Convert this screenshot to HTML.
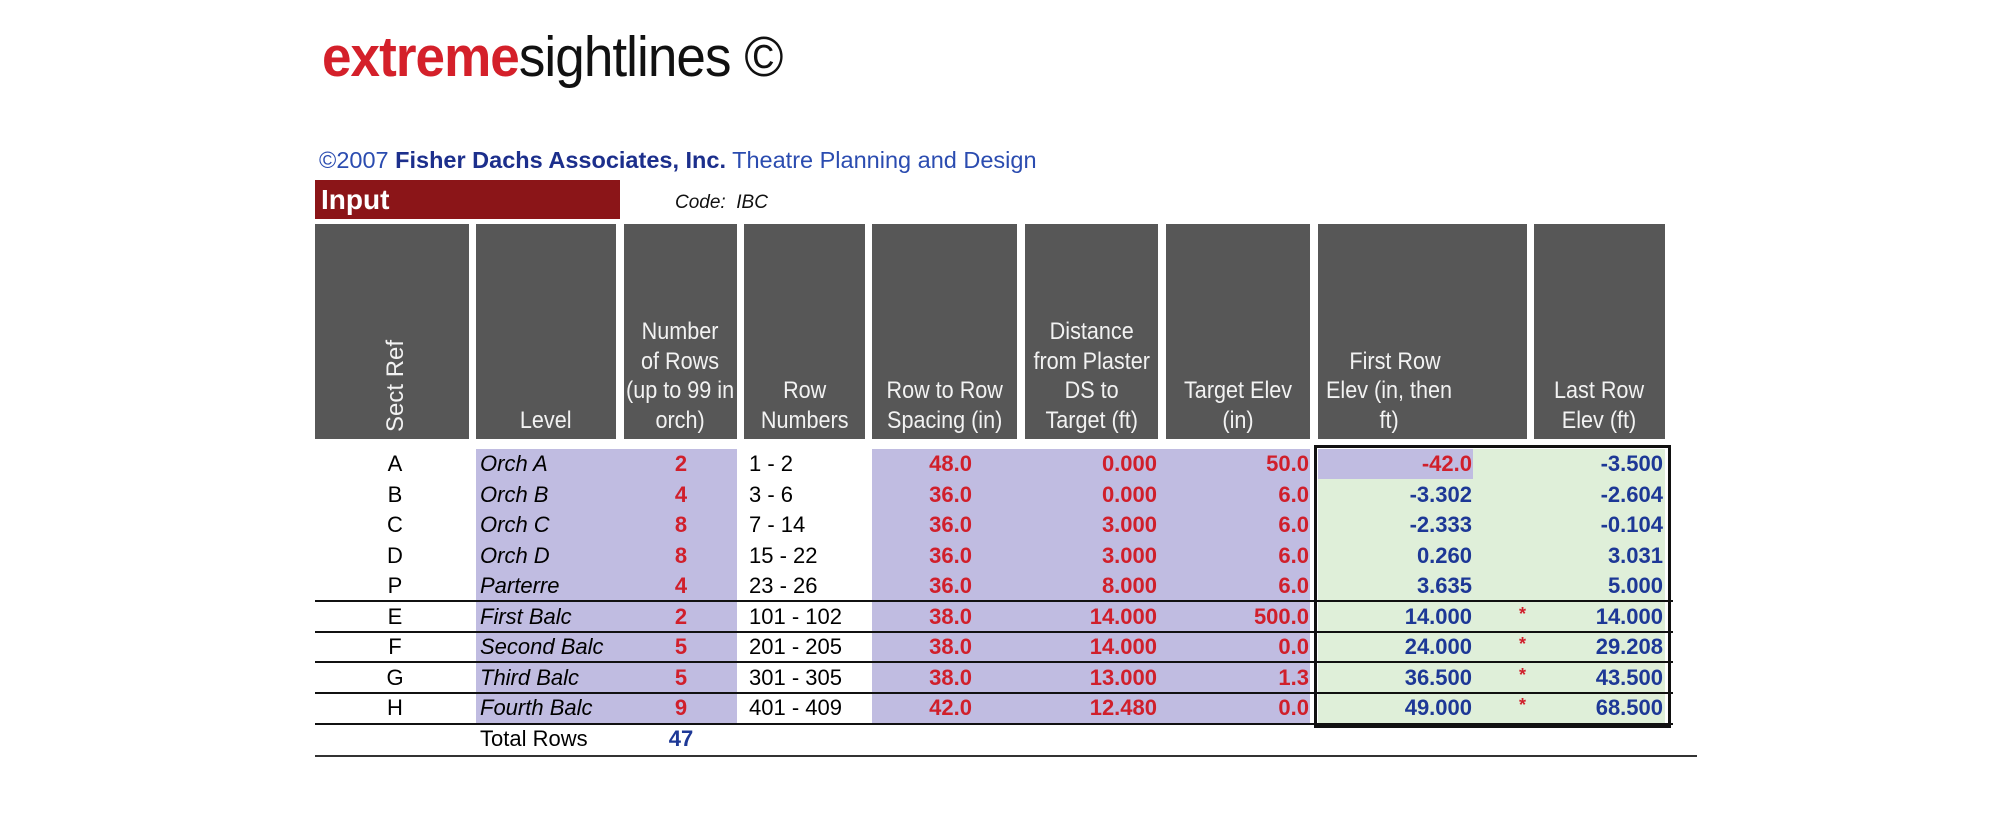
<!DOCTYPE html>
<html><head><meta charset="utf-8"><style>
*{margin:0;padding:0;box-sizing:border-box}
body{width:2000px;height:826px;background:#fff;position:relative;overflow:hidden;font-family:"Liberation Sans",Arial,sans-serif}
.a{position:absolute}
.h{position:absolute;top:224px;height:215px;background:#575757;color:#f2f2f2;font-size:24px;line-height:29.5px;display:flex;align-items:flex-end;justify-content:center;text-align:center;padding-bottom:4px}
.h span{display:inline-block;transform:scaleX(.9);white-space:nowrap}
.c{position:absolute;height:30px;line-height:30px;white-space:nowrap;font-size:22px}
.r{text-align:right;font-weight:bold;color:#d01f2b}
.b{text-align:right;font-weight:bold;color:#1d3896}
.ln{position:absolute;height:2px;background:#111}
</style></head><body>
<div class="a" style="left:322px;top:22px;font-size:57px;line-height:70px;white-space:nowrap;letter-spacing:-1px;transform:scaleX(.93);transform-origin:0 0"><span style="color:#d4202a;font-weight:bold">extreme</span><span style="color:#111">sightlines ©</span></div>
<div class="a" style="left:319px;top:147px;font-size:23.5px;white-space:nowrap;color:#2b4cb0">©2007 <b style="color:#1c2f8c">Fisher Dachs Associates, Inc.</b> Theatre Planning and Design</div>
<div class="a" style="left:315px;top:180px;width:305px;height:39px;background:#8b1518;color:#fff;font-weight:bold;font-size:28px;line-height:39px;padding-left:6px">Input</div>
<div class="a" style="left:675px;top:192px;font-size:19px;font-style:italic;color:#111">Code:&nbsp; IBC</div>

<div class="h" style="left:315px;width:154px;justify-content:flex-start;padding-left:10px"><span style="transform:rotate(-90deg);transform-origin:0 0;position:absolute;left:66px;bottom:-22px;white-space:nowrap">Sect Ref</span></div>
<div class="h" style="left:476px;width:140px"><span>Level</span></div>
<div class="h" style="left:624px;width:113px"><span>Number<br>of Rows<br>(up to 99 in<br>orch)</span></div>
<div class="h" style="left:744px;width:121px"><span>Row<br>Numbers</span></div>
<div class="h" style="left:872px;width:145px"><span>Row to Row<br>Spacing (in)</span></div>
<div class="h" style="left:1025px;width:133px"><span>Distance<br>from Plaster<br>DS to<br>Target (ft)</span></div>
<div class="h" style="left:1166px;width:144px"><span>Target Elev<br>(in)</span></div>
<div class="h" style="left:1318px;width:209px;justify-content:flex-start;padding-left:8px"><span style="transform-origin:0 0">&nbsp;&nbsp;First Row<br>Elev (in, then<br>ft)</span></div>
<div class="h" style="left:1534px;width:131px"><span>Last Row<br>Elev (ft)</span></div>

<div class="a" style="left:476px;top:449px;width:261px;height:275px;background:#c0bce1"></div>
<div class="a" style="left:872px;top:449px;width:438px;height:275px;background:#c0bce1"></div>
<div class="a" style="left:1318px;top:449px;width:347px;height:275px;background:#dfefd9"></div>
<div class="a" style="left:1318px;top:449px;width:155px;height:30px;background:#c0bce1"></div>
<div class="a" style="left:1314px;top:445px;width:357px;height:283px;border:3px solid #111"></div>

<div class="ln" style="left:315px;width:1358px;top:600px"></div>
<div class="ln" style="left:315px;width:1358px;top:631px"></div>
<div class="ln" style="left:315px;width:1358px;top:661px"></div>
<div class="ln" style="left:315px;width:1358px;top:692px"></div>
<div class="ln" style="left:315px;width:1358px;top:723px"></div>
<div class="ln" style="left:315px;width:1382px;top:755px;background:#333"></div>

<div style="position:absolute;left:0;top:449px">
<div class="c" style="top:0;left:375px;width:40px;text-align:center">A</div>
<div class="c" style="top:30.5px;left:375px;width:40px;text-align:center">B</div>
<div class="c" style="top:61px;left:375px;width:40px;text-align:center">C</div>
<div class="c" style="top:91.5px;left:375px;width:40px;text-align:center">D</div>
<div class="c" style="top:122px;left:375px;width:40px;text-align:center">P</div>
<div class="c" style="top:152.5px;left:375px;width:40px;text-align:center">E</div>
<div class="c" style="top:183px;left:375px;width:40px;text-align:center">F</div>
<div class="c" style="top:213.5px;left:375px;width:40px;text-align:center">G</div>
<div class="c" style="top:244px;left:375px;width:40px;text-align:center">H</div>
<div class="c" style="top:274.5px;left:480px">Total Rows</div>

<div class="c" style="top:0;left:480px;font-style:italic">Orch A</div>
<div class="c" style="top:30.5px;left:480px;font-style:italic">Orch B</div>
<div class="c" style="top:61px;left:480px;font-style:italic">Orch C</div>
<div class="c" style="top:91.5px;left:480px;font-style:italic">Orch D</div>
<div class="c" style="top:122px;left:480px;font-style:italic">Parterre</div>
<div class="c" style="top:152.5px;left:480px;font-style:italic">First Balc</div>
<div class="c" style="top:183px;left:480px;font-style:italic">Second Balc</div>
<div class="c" style="top:213.5px;left:480px;font-style:italic">Third Balc</div>
<div class="c" style="top:244px;left:480px;font-style:italic">Fourth Balc</div>

<div class="c r" style="top:0;left:661px;width:40px;text-align:center">2</div>
<div class="c r" style="top:30.5px;left:661px;width:40px;text-align:center">4</div>
<div class="c r" style="top:61px;left:661px;width:40px;text-align:center">8</div>
<div class="c r" style="top:91.5px;left:661px;width:40px;text-align:center">8</div>
<div class="c r" style="top:122px;left:661px;width:40px;text-align:center">4</div>
<div class="c r" style="top:152.5px;left:661px;width:40px;text-align:center">2</div>
<div class="c r" style="top:183px;left:661px;width:40px;text-align:center">5</div>
<div class="c r" style="top:213.5px;left:661px;width:40px;text-align:center">5</div>
<div class="c r" style="top:244px;left:661px;width:40px;text-align:center">9</div>
<div class="c b" style="top:274.5px;left:661px;width:40px;text-align:center">47</div>

<div class="c" style="top:0;left:749px">1 - 2</div>
<div class="c" style="top:30.5px;left:749px">3 - 6</div>
<div class="c" style="top:61px;left:749px">7 - 14</div>
<div class="c" style="top:91.5px;left:749px">15 - 22</div>
<div class="c" style="top:122px;left:749px">23 - 26</div>
<div class="c" style="top:152.5px;left:749px">101 - 102</div>
<div class="c" style="top:183px;left:749px">201 - 205</div>
<div class="c" style="top:213.5px;left:749px">301 - 305</div>
<div class="c" style="top:244px;left:749px">401 - 409</div>

<div class="c r" style="top:0;left:872px;width:100px">48.0</div>
<div class="c r" style="top:30.5px;left:872px;width:100px">36.0</div>
<div class="c r" style="top:61px;left:872px;width:100px">36.0</div>
<div class="c r" style="top:91.5px;left:872px;width:100px">36.0</div>
<div class="c r" style="top:122px;left:872px;width:100px">36.0</div>
<div class="c r" style="top:152.5px;left:872px;width:100px">38.0</div>
<div class="c r" style="top:183px;left:872px;width:100px">38.0</div>
<div class="c r" style="top:213.5px;left:872px;width:100px">38.0</div>
<div class="c r" style="top:244px;left:872px;width:100px">42.0</div>

<div class="c r" style="top:0;left:1037px;width:120px">0.000</div>
<div class="c r" style="top:30.5px;left:1037px;width:120px">0.000</div>
<div class="c r" style="top:61px;left:1037px;width:120px">3.000</div>
<div class="c r" style="top:91.5px;left:1037px;width:120px">3.000</div>
<div class="c r" style="top:122px;left:1037px;width:120px">8.000</div>
<div class="c r" style="top:152.5px;left:1037px;width:120px">14.000</div>
<div class="c r" style="top:183px;left:1037px;width:120px">14.000</div>
<div class="c r" style="top:213.5px;left:1037px;width:120px">13.000</div>
<div class="c r" style="top:244px;left:1037px;width:120px">12.480</div>

<div class="c r" style="top:0;left:1189px;width:120px">50.0</div>
<div class="c r" style="top:30.5px;left:1189px;width:120px">6.0</div>
<div class="c r" style="top:61px;left:1189px;width:120px">6.0</div>
<div class="c r" style="top:91.5px;left:1189px;width:120px">6.0</div>
<div class="c r" style="top:122px;left:1189px;width:120px">6.0</div>
<div class="c r" style="top:152.5px;left:1189px;width:120px">500.0</div>
<div class="c r" style="top:183px;left:1189px;width:120px">0.0</div>
<div class="c r" style="top:213.5px;left:1189px;width:120px">1.3</div>
<div class="c r" style="top:244px;left:1189px;width:120px">0.0</div>

<div class="c r" style="top:0;left:1352px;width:120px">-42.0</div>
<div class="c b" style="top:30.5px;left:1352px;width:120px">-3.302</div>
<div class="c b" style="top:61px;left:1352px;width:120px">-2.333</div>
<div class="c b" style="top:91.5px;left:1352px;width:120px">0.260</div>
<div class="c b" style="top:122px;left:1352px;width:120px">3.635</div>
<div class="c b" style="top:152.5px;left:1352px;width:120px">14.000</div>
<div class="c b" style="top:183px;left:1352px;width:120px">24.000</div>
<div class="c b" style="top:213.5px;left:1352px;width:120px">36.500</div>
<div class="c b" style="top:244px;left:1352px;width:120px">49.000</div>

<div class="c r" style="top:152.5px;left:1519px;font-size:18px;line-height:24px">*</div>
<div class="c r" style="top:183px;left:1519px;font-size:18px;line-height:24px">*</div>
<div class="c r" style="top:213.5px;left:1519px;font-size:18px;line-height:24px">*</div>
<div class="c r" style="top:244px;left:1519px;font-size:18px;line-height:24px">*</div>

<div class="c b" style="top:0;left:1543px;width:120px">-3.500</div>
<div class="c b" style="top:30.5px;left:1543px;width:120px">-2.604</div>
<div class="c b" style="top:61px;left:1543px;width:120px">-0.104</div>
<div class="c b" style="top:91.5px;left:1543px;width:120px">3.031</div>
<div class="c b" style="top:122px;left:1543px;width:120px">5.000</div>
<div class="c b" style="top:152.5px;left:1543px;width:120px">14.000</div>
<div class="c b" style="top:183px;left:1543px;width:120px">29.208</div>
<div class="c b" style="top:213.5px;left:1543px;width:120px">43.500</div>
<div class="c b" style="top:244px;left:1543px;width:120px">68.500</div>
</div>
</body></html>
